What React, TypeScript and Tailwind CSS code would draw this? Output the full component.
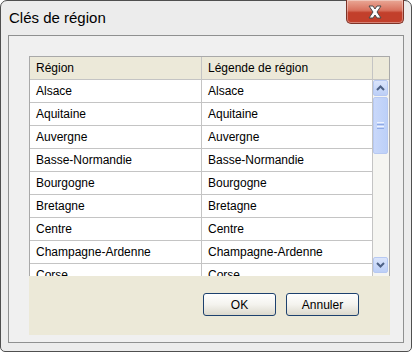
const regions = [
  "Alsace",
  "Aquitaine",
  "Auvergne",
  "Basse-Normandie",
  "Bourgogne",
  "Bretagne",
  "Centre",
  "Champagne-Ardenne",
  "Corse",
  "Franche-Comté",
];

function CloseButton() {
  return (
    <div className="relative mt-[-1px] h-[24px] w-[58px] rounded-b-[5px] border border-t-0 border-[#7d3327] bg-gradient-to-b from-[#e9a896] from-0% via-[#d8705d] via-45% to-[#c23f2b] to-55% shadow-[inset_0_0_0_1px_rgba(255,255,255,0.35)] flex items-center justify-center">
      <svg width="20" height="16" viewBox="0 0 20 16">
        <path
          d="M4 2 L8 2 L10 5 L12 2 L16 2 L12 8 L16 14 L12 14 L10 11 L8 14 L4 14 L8 8 Z"
          fill="#ffffff"
          stroke="#4a4a4a"
          strokeWidth="1"
          strokeLinejoin="round"
        />
      </svg>
    </div>
  );
}

function ScrollButton({ up }: { up?: boolean }) {
  return (
    <div className="h-[16px] w-[15px] rounded-[2px] border border-[#b7c9f2] bg-gradient-to-b from-[#dbe5fb] to-[#bccff7] flex items-center justify-center">
      <svg width="9" height="6" viewBox="0 0 9 6">
        <path
          d={up ? "M1 5 L4.5 1.5 L8 5" : "M1 1 L4.5 4.5 L8 1"}
          fill="none"
          stroke="#4d6185"
          strokeWidth="2"
        />
      </svg>
    </div>
  );
}

function ScrollBar() {
  return (
    <div className="w-[16px] h-full bg-[#f5f5f1] flex flex-col">
      <ScrollButton up />
      <div className="mt-px h-[57px] w-[15px] rounded-[2px] border border-[#b7c9f2] bg-gradient-to-r from-[#c9d8fa] to-[#bcd0f8] flex flex-col items-center justify-center gap-px">
        <div className="h-px w-[7px] bg-[#eef3fe]" />
        <div className="h-px w-[7px] bg-[#8faae6]" />
        <div className="h-px w-[7px] bg-[#eef3fe]" />
        <div className="h-px w-[7px] bg-[#8faae6]" />
      </div>
      <div className="flex-1" />
      <ScrollButton />
      <div className="h-[3px]" />
    </div>
  );
}

function XpButton({ label }: { label: string }) {
  return (
    <button className="h-[23px] w-[73px] rounded-[3px] border border-[#1d416e] bg-gradient-to-b from-[#ffffff] via-[#f4f3ee] to-[#dcd9cd] text-[12px] text-black">
      {label}
    </button>
  );
}

export default function App() {
  return (
    <div className="w-[412px] h-[352px] bg-white font-['Liberation_Sans',Arial,sans-serif]">
      <div className="w-full h-full border border-[#4f4f4f] rounded-t-[7px] rounded-b-[5px] bg-[#ececec] flex flex-col px-[7px] pb-[8px]">
        <div className="h-[34px] flex items-start justify-between">
          <div className="pl-px pt-[6px] text-[15px] text-black font-['Segoe_UI','Liberation_Sans',sans-serif]">
            Clés de région
          </div>
          <CloseButton />
        </div>
        <div className="flex-1 border border-[#8f9090] bg-[#f0f0f0] pl-[20px] pt-[20px]">
          <div className="w-[361px] flex flex-col">
            <div className="h-[220px] border border-b-0 border-[#a9a9a9] bg-white overflow-hidden flex flex-col text-[12px] text-black">
              <div className="h-[23px] shrink-0 flex border-b border-[#c4c4c4] bg-[#ece9d9]">
                <div className="w-[172px] border-r border-[#c4c4c4] pl-[6px] flex items-center">
                  Région
                </div>
                <div className="w-[171px] border-r border-[#c4c4c4] pl-[6px] flex items-center">
                  Légende de région
                </div>
                <div className="flex-1" />
              </div>
              <div className="flex-1 flex min-h-0">
                <div className="w-[343px] overflow-hidden">
                  {regions.map((r) => (
                    <div key={r} className="h-[23px] flex border-b border-[#c4c4c4]">
                      <div className="w-[172px] border-r border-[#c4c4c4] pl-[6px] flex items-center">
                        {r}
                      </div>
                      <div className="w-[171px] border-r border-[#c4c4c4] pl-[6px] flex items-center">
                        {r}
                      </div>
                    </div>
                  ))}
                </div>
                <ScrollBar />
              </div>
            </div>
            <div className="h-[59px] bg-[#ece9d8] flex items-start justify-end gap-[10px] pt-[17px] pr-[31px]">
              <XpButton label="OK" />
              <XpButton label="Annuler" />
            </div>
          </div>
        </div>
      </div>
    </div>
  );
}
